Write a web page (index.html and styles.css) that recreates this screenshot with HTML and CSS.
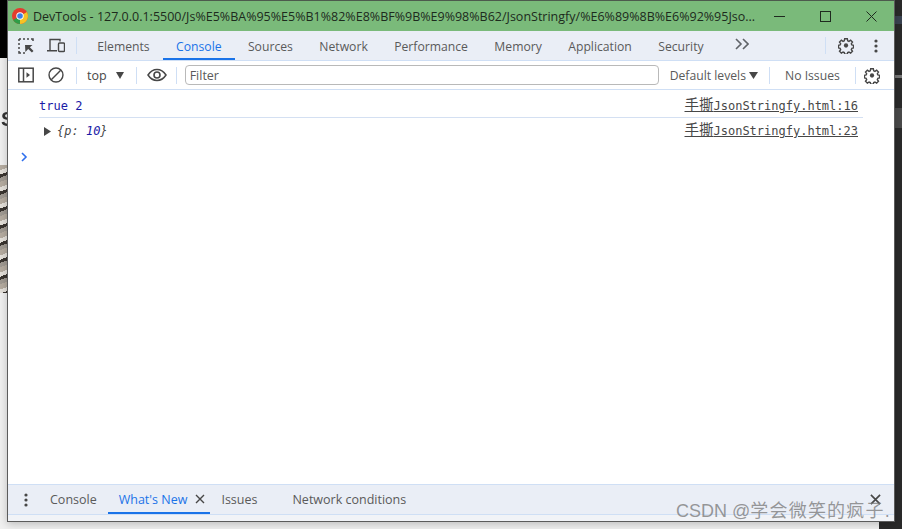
FILE: index.html
```html
<!DOCTYPE html>
<html lang="en">
<head>
<meta charset="utf-8">
<title>DevTools</title>
<link rel="stylesheet" href="styles.css">
</head>
<body>
<div class="desk">
  <div class="bg-top"></div>
  <div class="bg-letter">S</div>
  <div class="bg-photo"></div>
  <div class="bg-right">
    <i class="mark mark-a"></i>
    <i class="mark mark-b"></i>
    <i class="mark mark-c"></i>
  </div>
  <div class="bg-corner"></div>
  <div class="window">
    <header class="titlebar">
      <svg class="chrome" width="16" height="16" viewBox="0 0 16 16"><circle cx="8" cy="8" r="8" fill="#e33b2e"/><path d="M8 8 L1.100 12 A8 8 0 0 0 8 16 Z" fill="#2f9e48"/><path d="M8 8 L14.900 4 A8 8 0 0 1 8 16 Z" fill="#f6c324"/><circle cx="8" cy="8" r="3.700" fill="#fff"/><circle cx="8" cy="8" r="2.800" fill="#3d7fe6"/></svg>
      <span class="title">DevTools - 127.0.0.1:5500/Js%E5%BA%95%E5%B1%82%E8%BF%9B%E9%98%B62/JsonStringfy/%E6%89%8B%E6%92%95Jso...</span>
      <div class="winctl">
        <svg width="11" height="11" viewBox="0 0 11 11"><path d="M0 5.500h11" stroke="#1f2a1f" fill="none"/></svg>
        <svg width="11" height="11" viewBox="0 0 11 11"><rect x=".5" y=".5" width="10" height="10" stroke="#1f2a1f" fill="none"/></svg>
        <svg width="11" height="11" viewBox="0 0 11 11"><path d="M.5 .5l10 10M10.500 .5l-10 10" stroke="#1f2a1f" fill="none"/></svg>
      </div>
    </header>
    <nav class="tabbar">
      <svg class="ic" width="16" height="16" viewBox="0 0 16 16"><path d="M1 1h2M5 1h2M9 1h2M13 1h2v2M1 1v2M1 5v2M1 9v2M1 13v2h2M5 15h2" stroke="#474747" stroke-width="1.500" fill="none"/><path d="M7 7h7.500l-2.600 2.200L15.500 13l-1.600 1.600-3.700-3.700L7.400 14z" fill="#474747"/></svg>
      <svg class="ic ic-dev" width="18" height="15" viewBox="0 0 18 15"><path d="M3 12V1.500h10V3.500M0 12.800h10" stroke="#474747" stroke-width="1.400" fill="none"/><rect x="11.500" y="5" width="6" height="8.500" rx="1" stroke="#474747" stroke-width="1.400" fill="none"/></svg>
      <div class="sep sep-tabs"></div>
      <a class="tab">Elements</a>
      <a class="tab active">Console</a>
      <a class="tab">Sources</a>
      <a class="tab">Network</a>
      <a class="tab">Performance</a>
      <a class="tab">Memory</a>
      <a class="tab">Application</a>
      <a class="tab">Security</a>
      <svg class="more" width="14" height="12" viewBox="0 0 14 12"><path d="M1 1l5 5-5 5M8 1l5 5-5 5" stroke="#5f6368" stroke-width="1.600" fill="none"/></svg>
      <div class="tab-right">
        <div class="sep"></div>
        <svg class="gear" width="16" height="17" viewBox="0 0 18 18"><path d="M7.500 1.500h3l.4 2.200 1.400.6 1.900-1.300 2.100 2.100-1.300 1.900.6 1.400 1.900.4v3l-1.900.4-.6 1.400 1.300 1.900-2.100 2.100-1.900-1.300-1.400.6-.4 1.900h-3l-.4-1.900-1.400-.6-1.900 1.300-2.100-2.100 1.300-1.900-.6-1.400-1.900-.4v-3l1.900-.4.6-1.400-1.300-1.900 2.100-2.100 1.900 1.300 1.400-.6z" stroke="#474747" stroke-width="1.600" fill="none"/><circle cx="9" cy="9" r="2.400" fill="#474747"/></svg>
        <svg class="dots" width="4" height="14" viewBox="0 0 4 14"><circle cx="2" cy="2" r="1.600" fill="#474747"/><circle cx="2" cy="7" r="1.600" fill="#474747"/><circle cx="2" cy="12" r="1.600" fill="#474747"/></svg>
      </div>
    </nav>
    <div class="toolbar">
      <svg class="ic" width="16" height="16" viewBox="0 0 16 16"><rect x=".8" y="1.200" width="14.400" height="13.600" stroke="#474747" stroke-width="1.500" fill="none"/><path d="M5.500 1v14" stroke="#474747" stroke-width="1.500"/><path d="M8.500 5.200l3.500 2.800-3.500 2.800z" fill="#474747"/></svg>
      <svg class="ic ic-clear" width="16" height="16" viewBox="0 0 17 17"><circle cx="8.500" cy="8.500" r="7.400" stroke="#474747" stroke-width="1.500" fill="none"/><path d="M3.500 13.500l10-10" stroke="#474747" stroke-width="1.500"/></svg>
      <div class="sep sep-a"></div>
      <span class="ctx">top</span>
      <svg class="caret" width="8" height="7" viewBox="0 0 8 7"><path d="M0 0h8L4 7z" fill="#474747"/></svg>
      <div class="sep sep-b"></div>
      <svg class="eye" width="20" height="14" viewBox="0 0 20 14"><path d="M1 7c2.500-3.800 5.500-5.500 9-5.500s6.500 1.700 9 5.500c-2.500 3.800-5.500 5.500-9 5.500S3.500 10.800 1 7z" stroke="#474747" stroke-width="1.500" fill="none"/><circle cx="10" cy="7" r="3" fill="none" stroke="#474747" stroke-width="1.600"/></svg>
      <div class="sep sep-c"></div>
      <div class="filter">Filter</div>
      <span class="levels">Default levels</span>
      <svg class="caret caret-l" width="9" height="7" viewBox="0 0 9 7"><path d="M0 0h9L4.500 7z" fill="#474747"/></svg>
      <div class="sep sep-d"></div>
      <span class="issues">No Issues</span>
      <div class="sep sep-e"></div>
      <svg class="gear" width="16" height="17" viewBox="0 0 18 18"><path d="M7.500 1.500h3l.4 2.200 1.400.6 1.900-1.300 2.100 2.100-1.300 1.900.6 1.400 1.900.4v3l-1.900.4-.6 1.400 1.300 1.900-2.100 2.100-1.900-1.300-1.400.6-.4 1.900h-3l-.4-1.900-1.400-.6-1.900 1.300-2.100-2.100 1.300-1.900-.6-1.400-1.900-.4v-3l1.900-.4.6-1.400-1.300-1.900 2.100-2.100 1.900 1.300 1.400-.6z" stroke="#474747" stroke-width="1.600" fill="none"/><circle cx="9" cy="9" r="2.400" fill="#474747"/></svg>
    </div>
    <main class="console">
      <div class="msg msg-first">
        <span class="val"><span class="kw">true</span> <span class="kw">2</span></span>
        <a class="src"><span class="cjk">手撕</span>JsonStringfy.html:16</a>
      </div>
      <div class="msg msg-second">
        <span class="val obj"><svg class="tri" width="7" height="9" viewBox="0 0 7 9"><path d="M0 0l7 4.500-7 4.500z" fill="#474747"/></svg><i class="brace">{p: </i><i class="kw">10</i><i class="brace">}</i></span>
        <a class="src"><span class="cjk">手撕</span>JsonStringfy.html:23</a>
      </div>
      <svg class="prompt" width="7" height="10" viewBox="0 0 7 10"><path d="M1 1l4 4-4 4" stroke="#2f6fed" stroke-width="1.600" fill="none"/></svg>
    </main>
    <footer class="drawer">
      <div class="drawer-tabs">
        <svg class="dots" width="4" height="14" viewBox="0 0 4 14"><circle cx="2" cy="2" r="1.600" fill="#474747"/><circle cx="2" cy="7" r="1.600" fill="#474747"/><circle cx="2" cy="12" r="1.600" fill="#474747"/></svg>
        <a class="dtab dtab-console">Console</a>
        <a class="dtab active">What's New<svg width="10" height="10" viewBox="0 0 10 10"><path d="M1 1l8 8M9 1L1 9" stroke="#474747" stroke-width="1.400" fill="none"/></svg></a>
        <a class="dtab dtab-issues">Issues</a>
        <a class="dtab dtab-net">Network conditions</a>
        <svg class="dclose" width="11" height="11" viewBox="0 0 12 12"><path d="M1 1l10 10M11 1L1 11" stroke="#474747" stroke-width="1.800" fill="none"/></svg>
      </div>
    </footer>
  </div>
  <div class="watermark">CSDN @<span class="wm-cjk">学会微笑的疯子</span>.</div>
</div>
</body>
</html>
```
FILE: styles.css
```css
* { box-sizing: border-box; }
html, body { margin: 0; padding: 0; }
body { font-family: "Liberation Sans", Arial, sans-serif; background: #f0f0f0; }
.desk { position: relative; width: 902px; height: 529px; overflow: hidden; background: #f0f0f0; }
.bg-top { position: absolute; left: 0; top: 0; width: 8px; height: 58px; background: #000; }
.bg-letter { position: absolute; left: 1px; top: 108px; font: bold 20px "Liberation Sans", sans-serif; color: #333; filter: blur(.5px); }
.bg-photo { position: absolute; left: 0; top: 165px; width: 8px; height: 128px; background: repeating-linear-gradient(160deg, #b5aca0 0 5px, #e4e0da 5px 9px, #3a3530 9px 12px, #a09a92 12px 16px); filter: blur(.7px); }
.bg-right { position: absolute; left: 894px; top: 0; width: 8px; height: 529px; background: #2a2a2a; }
.mark { position: absolute; display: block; left: 1px; width: 7px; background: #555; }
.mark-a { top: 16px; height: 8px; background: #3a4250; }
.mark-b { top: 75px; height: 3px; background: #777; }
.mark-c { top: 108px; height: 20px; background: #4a4a4a; }
.bg-corner { position: absolute; left: 879px; top: 521px; width: 15px; height: 8px; background: #2a2a2a; }
.window { position: absolute; left: 7px; top: 0; width: 888px; height: 522px; border: 1px solid #5c5c5c; border-top-color: #4d5a4d; background: #fff; display: flex; flex-direction: column; box-shadow: 0 2px 8px rgba(0,0,0,.22); }
.titlebar { height: 30px; flex: none; background: #7aba7a; display: flex; align-items: center; padding-left: 4px; }
.chrome { flex: none; }
.title { margin-left: 5px; font: 12.500px "Open Sans", sans-serif; color: #1d2a1d; white-space: nowrap; width: 735px; overflow: hidden; }
.winctl { margin-left: auto; display: flex; gap: 35px; padding-right: 17px; }
.tabbar { height: 30px; flex: none; background: #eaeef6; border-bottom: 1px solid #cfdff5; display: flex; align-items: center; padding-left: 10px; font: 12.200px "Open Sans", sans-serif; color: #5a5a5a; }
.ic { flex: none; }
.ic-dev { margin-left: 13px; }
.sep { width: 1px; height: 17px; background: #cfdff5; flex: none; }
.sep-tabs { margin-left: 11px; margin-right: 7px; }
.tab { height: 29px; padding: 0 13.200px; line-height: 31px; color: #5a5a5a; white-space: nowrap; }
.tab.active { color: #1a73e8; border-bottom: 2px solid #1a73e8; }
.more { margin-left: 18px; margin-top: -3px; }
.tab-right { margin-left: auto; display: flex; align-items: center; }
.tab-right .gear { margin-left: 12px; }
.tab-right .dots { margin-left: 20px; margin-right: 16px; }
.toolbar { height: 29px; flex: none; background: #fff; border-bottom: 1px solid #cfdff5; display: flex; align-items: center; padding-left: 10px; font: 12.200px "Open Sans", sans-serif; color: #474747; }
.ic-clear { margin-left: 14px; }
.sep-a { margin-left: 12px; }
.ctx { margin-left: 10px; font-size: 12.500px; }
.caret { margin-left: 9px; flex: none; }
.sep-b { margin-left: 12px; }
.eye { margin-left: 10px; flex: none; }
.sep-c { margin-left: 9px; }
.filter { margin-left: 8px; width: 474px; height: 20px; border: 1px solid #b9b9b9; border-radius: 4px; line-height: 20px; padding-left: 4px; color: #5a5a5a; font-size: 12.500px; }
.levels { margin-left: 11px; white-space: nowrap; color: #5a5a5a; }
.caret-l { margin-left: 3px; }
.sep-d { margin-left: 11px; }
.issues { margin-left: 15px; white-space: nowrap; color: #5a5a5a; }
.sep-e { margin-left: 15px; }
.toolbar .gear { margin-left: 8px; }
.console { flex: 1; background: #fff; padding: 0 31px; font: 12px "DejaVu Sans Mono", "Noto Sans CJK SC", monospace; }
.msg { display: flex; justify-content: space-between; align-items: center; }
.msg-first { height: 28px; border-bottom: 1px solid #d4e0f2; padding-right: 5px; padding-top: 4px; }
.msg-second { height: 26px; padding-right: 5px; }
.kw { color: #1a1aa6; }
.obj { display: flex; align-items: center; margin-left: 5px; white-space: pre; }
.tri { margin-right: 6px; }
.brace { color: #474747; }
.src { color: #474747; text-decoration: underline; white-space: nowrap; }
.msg-first .src { margin-bottom: 4px; }
.msg-second .src { margin-top: -5px; }
.cjk { font-size: 14.500px; }
.prompt { display: block; margin-left: -18px; margin-top: 8px; }
.drawer { height: 37px; flex: none; background: #f1f3f7; border-top: 1px solid #cfdff5; }
.drawer-tabs { height: 30px; background: #eaeef6; border-bottom: 1px solid #cfdff5; display: flex; align-items: center; padding-left: 16px; font: 12.500px "Open Sans", sans-serif; color: #5a5a5a; }
.dots { flex: none; }
.dtab { white-space: nowrap; }
.dtab-console { margin-left: 22px; }
.dtab.active { margin-left: 11px; padding: 0 5px 0 11px; height: 29px; color: #1a73e8; border-bottom: 2px solid #1a73e8; display: flex; align-items: center; gap: 8px; padding-top: 1px; }
.dtab-issues { margin-left: 11px; }
.dtab-net { margin-left: 35px; }
.dclose { margin-left: auto; margin-right: 13px; }
.watermark { position: absolute; left: 676px; top: 496px; font: 18px "Liberation Sans", "Noto Sans CJK SC", sans-serif; color: rgba(120,120,120,.75); white-space: nowrap; }
.wm-cjk { letter-spacing: 1.200px; }
```
